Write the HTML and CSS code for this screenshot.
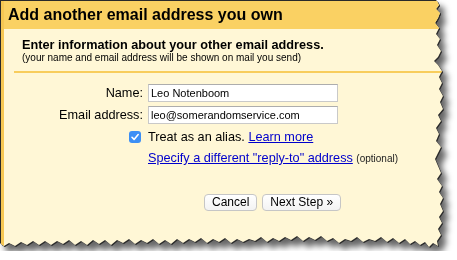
FILE: index.html
```html
<!DOCTYPE html>
<html>
<head>
<meta charset="utf-8">
<link rel="stylesheet" href="styles.css">
</head>
<body>
<div class="frame">
  <div class="panel">
    <div class="title">Add another email address you own</div>
    <div class="intro">
      <div class="intro-head">Enter information about your other email address.</div>
      <div class="intro-sub">(your name and email address will be shown on mail you send)</div>
    </div>
    <div class="rule"></div>
    <div class="form">
      <label class="label">Name:</label>
      <div class="field"><span class="input">Leo Notenboom</span></div>
      <label class="label">Email address:</label>
      <div class="field"><span class="input">leo@somerandomservice.com</span></div>
      <div class="label check-cell">
        <span class="checkbox"><svg width="12" height="12" viewBox="0 0 12 12"><path d="M3 6.3 L5.1 8.4 L9.2 3.6" fill="none" stroke="#fff" stroke-width="1.6" stroke-linecap="round" stroke-linejoin="round"/></svg></span>
      </div>
      <div class="text-cell">Treat as an alias. <a class="link" href="#">Learn more</a></div>
      <div></div>
      <div class="text-cell link-row"><a class="link" href="#">Specify a different "reply-to" address</a> <span class="optional">(optional)</span></div>
    </div>
    <div class="buttons">
      <button class="btn">Cancel</button>
      <button class="btn">Next Step »</button>
    </div>
  </div>
</div>
</body>
</html>
```
FILE: styles.css
```css
html, body {
  margin: 0;
  background: #ffffff;
}
body {
  font-family: "Liberation Sans", Arial, Helvetica, sans-serif;
  color: #000;
}
.frame {
  padding: 1px 0 0 1px;
  width: 445px;
  filter: drop-shadow(1px 1px 0 #2a2a2a) drop-shadow(-1px -1px 0 #2a2a2a) drop-shadow(5px 6px 3px rgba(0, 0, 0, 0.6));
}
.panel {
  box-sizing: border-box;
  width: 443px;
  height: 250px;
  background: #fff7d6;
  border-left: 3px solid #f6c753;
  clip-path: polygon(0 0, 436px 0, 438px 4px, 435px 8px, 439px 12px, 437px 17px, 434px 22px, 438px 27px, 435px 33px, 439px 38px, 436px 44px, 440px 50px, 437px 56px, 433px 60px, 437px 64px, 441px 70px, 438px 76px, 441px 82px, 438px 88px, 442px 95px, 439px 101px, 442px 108px, 437px 114px, 440px 120px, 435px 127px, 438px 133px, 435px 140px, 440px 146px, 437px 152px, 434px 158px, 437px 165px, 440px 172px, 436px 178px, 441px 185px, 438px 191px, 442px 197px, 439px 203px, 442px 210px, 438px 216px, 441px 222px, 437px 228px, 440px 234px, 436px 240px, 437px 245px, 432px 242px, 428px 246px, 424px 241px, 419px 244px, 414px 240px, 409px 243px, 404px 238px, 398px 242px, 392px 237px, 386px 241px, 380px 236px, 374px 240px, 368px 238px, 362px 241px, 356px 236px, 350px 240px, 344px 238px, 338px 242px, 332px 237px, 326px 240px, 320px 235px, 314px 239px, 308px 236px, 302px 240px, 296px 235px, 290px 239px, 284px 236px, 278px 240px, 272px 237px, 266px 241px, 260px 236px, 254px 240px, 248px 238px, 242px 241px, 236px 238px, 230px 242px, 224px 237px, 218px 241px, 212px 238px, 206px 242px, 200px 237px, 194px 241px, 188px 238px, 182px 242px, 176px 238px, 170px 243px, 164px 239px, 158px 243px, 152px 238px, 146px 242px, 140px 239px, 134px 243px, 128px 238px, 122px 242px, 116px 239px, 110px 244px, 104px 239px, 98px 243px, 92px 239px, 86px 244px, 80px 240px, 74px 244px, 68px 239px, 62px 243px, 56px 240px, 50px 244px, 44px 240px, 38px 244px, 32px 240px, 26px 244px, 20px 241px, 14px 245px, 8px 242px, 3px 245px, 0 243px);
}
.title {
  background: #fad163;
  height: 28px;
  line-height: 28px;
  padding-left: 4px;
  font-size: 16px;
  font-weight: bold;
  white-space: nowrap;
}
.intro {
  padding: 9px 0 0 18px;
}
.intro-head {
  font-size: 12.7px;
  font-weight: bold;
  line-height: 14px;
}
.intro-sub {
  font-size: 10px;
  line-height: 11px;
}
.rule {
  height: 2px;
  margin: 8px 0 0 10px;
  background: #f8cd5c;
}
.form {
  display: grid;
  grid-template-columns: 139px 190px;
  column-gap: 5px;
  row-gap: 4px;
  margin-top: 11px;
  font-size: 12.7px;
}
.label {
  text-align: right;
  line-height: 18px;
  white-space: nowrap;
}
.input {
  display: block;
  box-sizing: border-box;
  height: 18px;
  background: #fff;
  border: 1px solid #c9c9c9;
  border-top-color: #adadad;
  padding: 0 2px;
  font-size: 11px;
  line-height: 16px;
  white-space: nowrap;
}
.check-cell {
  display: flex;
  justify-content: flex-end;
  align-items: center;
  padding-right: 2px;
}
.checkbox {
  display: block;
  width: 12px;
  height: 12px;
  border-radius: 3px;
  background: #3c8ff5;
}
.checkbox svg {
  display: block;
}
.text-cell {
  line-height: 18px;
  white-space: nowrap;
}
.link-row {
  line-height: 16px;
}
.link {
  color: #0000cc;
  text-decoration: underline;
}
.optional {
  font-size: 10px;
  color: #222;
}
.buttons {
  display: flex;
  gap: 5px;
  padding-left: 200px;
  margin-top: 27px;
}
.btn {
  box-sizing: border-box;
  height: 17px;
  padding: 0 7px;
  font-family: "Liberation Sans", Arial, Helvetica, sans-serif;
  font-size: 12px;
  line-height: 15px;
  color: #000;
  background: linear-gradient(#ffffff, #f3f3f3);
  border: 1px solid #c6c6c6;
  border-radius: 4px;
}
```
